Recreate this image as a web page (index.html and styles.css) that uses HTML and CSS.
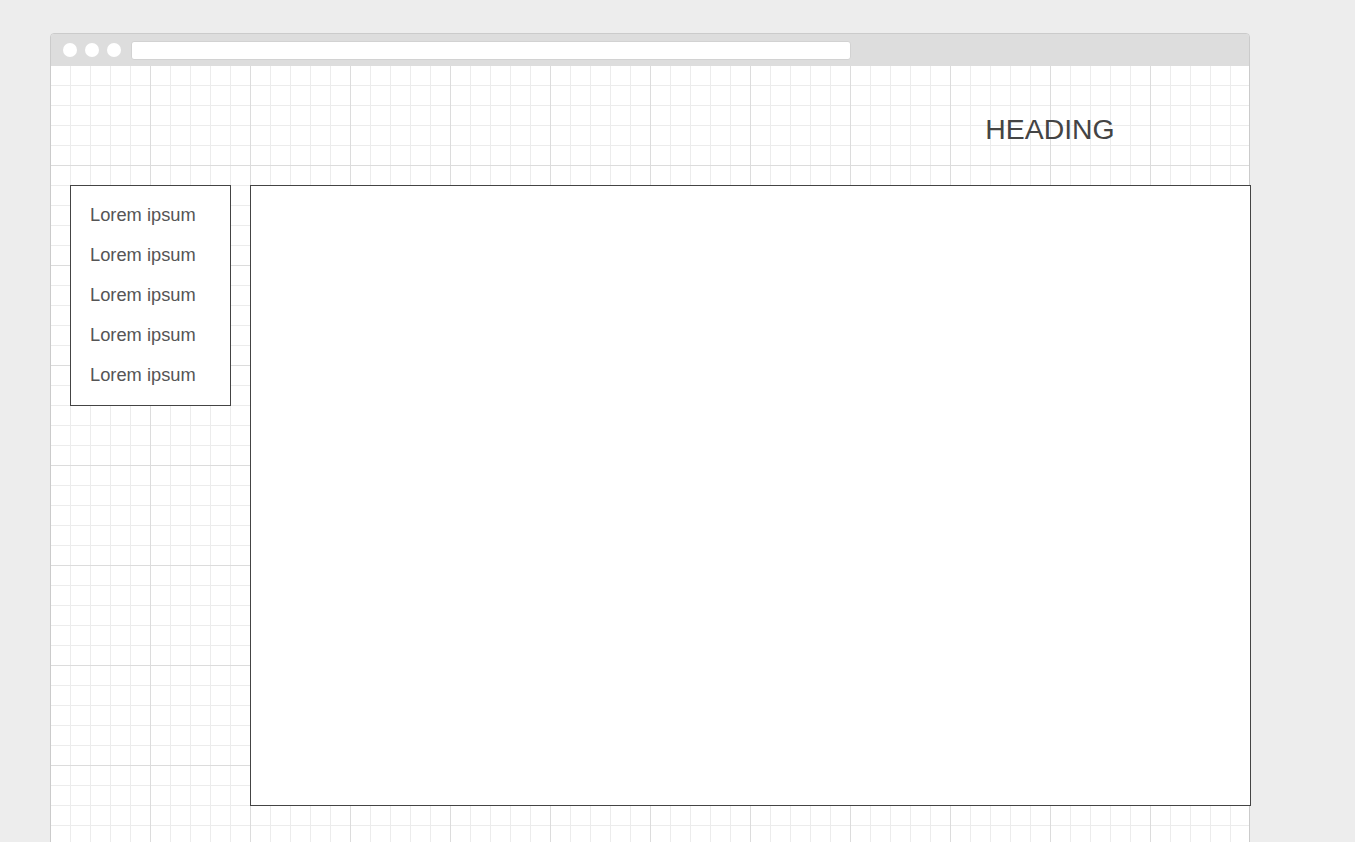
FILE: index.html
```html
<!DOCTYPE html>
<html>
<head>
<meta charset="utf-8">
<link rel="stylesheet" href="styles.css">
</head>
<body>
<div class="window">
  <div class="titlebar">
    <span class="dot"></span>
    <span class="dot"></span>
    <span class="dot"></span>
    <div class="address"></div>
  </div>
  <div class="canvas">
    <header class="header">
      <h1 class="heading">HEADING</h1>
    </header>
    <div class="row">
      <nav class="sidebar">
        <div class="item">Lorem ipsum</div>
        <div class="item">Lorem ipsum</div>
        <div class="item">Lorem ipsum</div>
        <div class="item">Lorem ipsum</div>
        <div class="item">Lorem ipsum</div>
      </nav>
      <main class="main"></main>
    </div>
  </div>
</div>
</body>
</html>
```
FILE: styles.css
```css
html, body {
  margin: 0;
  height: 842px;
  overflow: hidden;
}
body {
  background: #ededed;
  font-family: "Liberation Sans", Arial, sans-serif;
  padding: 33px 0 0 50px;
  box-sizing: border-box;
}
.window {
  width: 1200px;
  height: 900px;
  box-sizing: border-box;
  border: 1px solid #cbcbcb;
  border-radius: 4px 4px 0 0;
  display: flex;
  flex-direction: column;
}
.titlebar {
  height: 32px;
  flex: none;
  background: #dddddd;
  border-radius: 3px 3px 0 0;
  display: flex;
  align-items: center;
  padding-left: 12px;
  gap: 8px;
}
.dot {
  width: 14px;
  height: 14px;
  border-radius: 50%;
  background: #ffffff;
  flex: none;
}
.address {
  margin-left: 2px;
  width: 720px;
  height: 19px;
  background: #ffffff;
  border-radius: 3px;
  border: 1px solid #d2d2d2;
  box-sizing: border-box;
}
.canvas {
  flex: 1;
  background-color: #ffffff;
  background-image:
    linear-gradient(to right, #dcdcdc 1px, transparent 1px),
    linear-gradient(to bottom, #dcdcdc 1px, transparent 1px),
    linear-gradient(to right, #ececec 1px, transparent 1px),
    linear-gradient(to bottom, #ececec 1px, transparent 1px);
  background-size: 100px 100px, 100px 100px, 20px 20px, 20px 20px;
  background-position: 99px 99px, 99px 99px, 19px 19px, 19px 19px;
}
.header {
  height: 119px;
  box-sizing: border-box;
  padding-top: 47px;
  display: flex;
  justify-content: flex-end;
  padding-right: 99px;
}
.heading {
  margin: 0;
  width: 200px;
  text-align: center;
  font-size: 28.4px;
  line-height: 32px;
  font-weight: normal;
  color: #444444;
}
.row {
  display: flex;
  align-items: flex-start;
  padding-left: 19px;
  gap: 19px;
}
.sidebar {
  width: 161px;
  flex: none;
  box-sizing: border-box;
  border: 1px solid #444444;
  background: #ffffff;
  padding: 9px 0 10px 19px;
}
.item {
  font-size: 18.3px;
  line-height: 40px;
  color: #555555;
}
.main {
  width: 1001px;
  height: 621px;
  flex: none;
  box-sizing: border-box;
  border: 1px solid #444444;
  background: #ffffff;
}
```
